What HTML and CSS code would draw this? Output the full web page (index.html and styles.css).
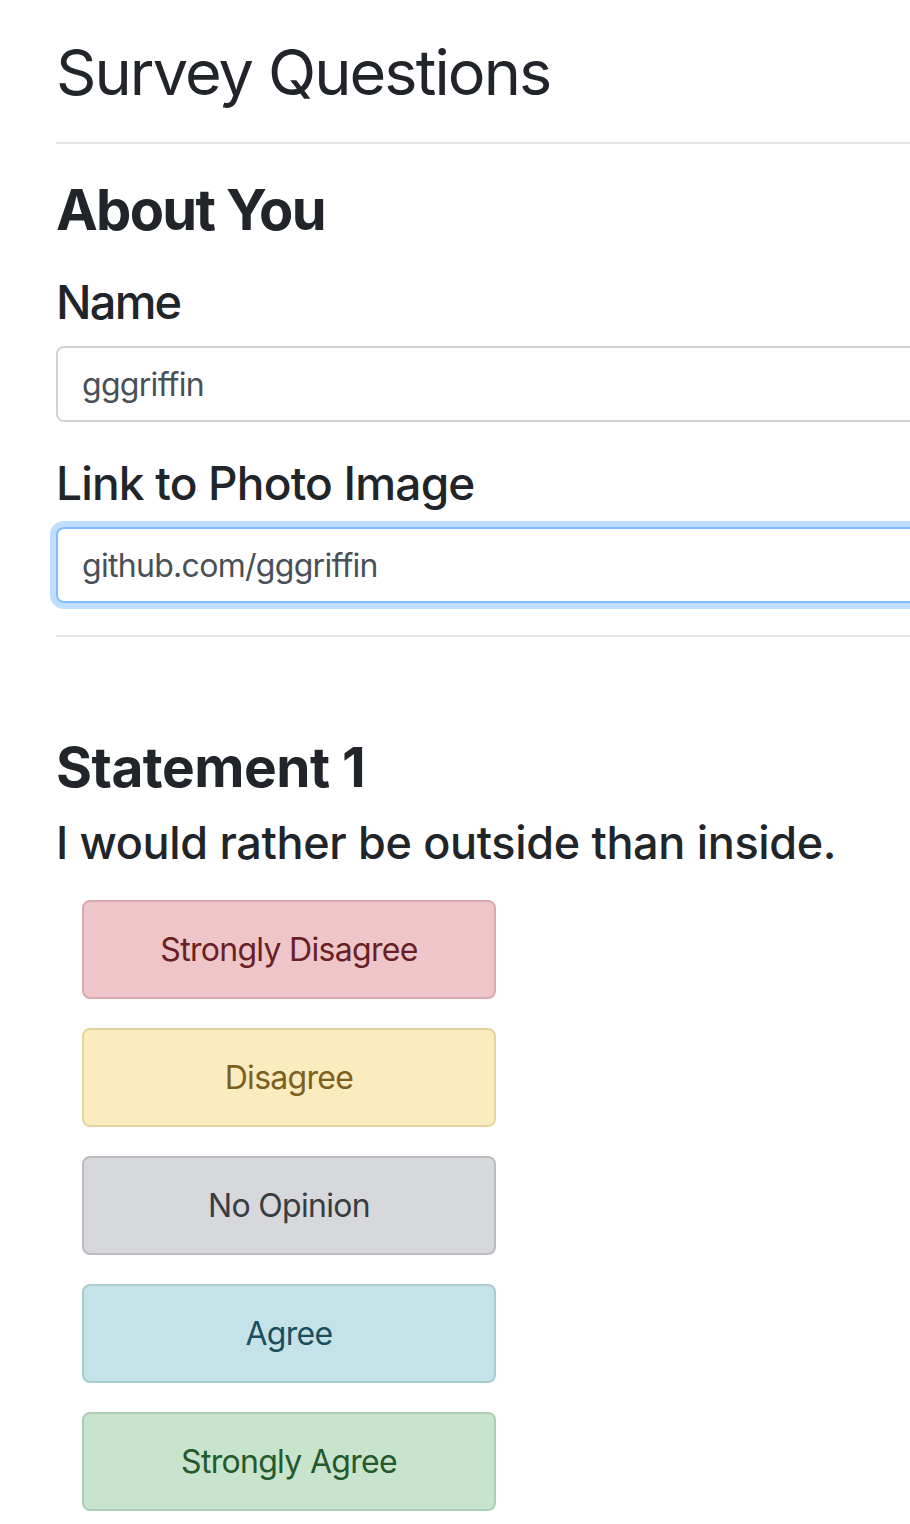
FILE: index.html
```html
<!DOCTYPE html>
<html lang="en">
<head>
<meta charset="utf-8">
<title>Survey Questions</title>
<link rel="stylesheet" href="styles.css">
</head>
<body>
<div class="container">
  <h1 class="title">Survey Questions</h1>
  <hr class="rule rule-top">
  <h3 class="section">About You</h3>
  <label class="label label-name" for="name">Name</label>
  <input class="field" id="name" type="text" value="gggriffin">
  <label class="label label-photo" for="photo">Link to Photo Image</label>
  <input class="field field-focus" id="photo" type="text" value="github.com/gggriffin">
  <hr class="rule rule-mid">
  <h3 class="statement">Statement 1</h3>
  <h4 class="question">I would rather be outside than inside.</h4>
  <div class="choices">
    <button class="choice choice-danger" type="button">Strongly Disagree</button>
    <button class="choice choice-warning" type="button">Disagree</button>
    <button class="choice choice-secondary" type="button">No Opinion</button>
    <button class="choice choice-info" type="button">Agree</button>
    <button class="choice choice-success" type="button">Strongly Agree</button>
  </div>
</div>
</body>
</html>
```

FILE: styles.css
```css
html, body {
  margin: 0;
  padding: 0;
  background: #ffffff;
  overflow: hidden;
}

body {
  font-family: Inter, "Noto Sans", "Liberation Sans", sans-serif;
  color: #212529;
}

.container {
  width: 1200px;
  padding-left: 56px;
  display: flex;
  flex-direction: column;
  align-items: stretch;
}

.title {
  font-size: 63px;
  font-weight: 400;
  line-height: 1.2;
  margin: 35px 0 0;
  letter-spacing: -1.9px;
}

.rule {
  border: 0;
  border-top: 2px solid #e5e5e5;
  margin: 0;
  height: 0;
}

.rule-top {
  margin-top: 31px;
}

.section {
  font-size: 56px;
  font-weight: 700;
  line-height: 1.2;
  margin: 33px 0 0;
  letter-spacing: -1.7px;
}

.label {
  display: block;
  font-size: 47px;
  font-weight: 500;
  line-height: 1.2;
  letter-spacing: -1.8px;
}

.label-name {
  margin-top: 30px;
}

.label-photo {
  margin-top: 34px;
  font-size: 46px;
  letter-spacing: -0.8px;
}

.field {
  box-sizing: border-box;
  height: 76px;
  margin-top: 16px;
  padding: 0 24px;
  border: 2px solid #ced4da;
  border-radius: 8px;
  font-family: inherit;
  font-size: 32px;
  letter-spacing: -0.7px;
  color: #495057;
  background: #fff;
  outline: none;
}

.field-focus {
  border-color: #80bdff;
  box-shadow: 0 0 0 6px rgba(0, 123, 255, 0.25);
}

.rule-mid {
  margin-top: 32px;
}

.statement {
  font-size: 55px;
  font-weight: 700;
  line-height: 1.2;
  margin: 97px 0 0;
  letter-spacing: -0.5px;
}

.question {
  font-size: 45px;
  font-weight: 500;
  line-height: 1.2;
  margin: 16px 0 0;
  letter-spacing: -0.35px;
}

.choices {
  display: flex;
  flex-direction: column;
  align-items: flex-start;
  gap: 29px;
  margin-top: 30px;
  padding-left: 26px;
}

.choice {
  box-sizing: border-box;
  width: 414px;
  height: 99px;
  border: 2px solid;
  border-radius: 8px;
  font-family: inherit;
  font-size: 32px;
  font-weight: 400;
  letter-spacing: -0.7px;
  text-align: center;
  padding: 0;
  cursor: pointer;
}

.choice-danger {
  background: #eec6ca;
  border-color: #d9aaaf;
  color: #6a1f25;
}

.choice-warning {
  background: #fbecc0;
  border-color: #e5d39e;
  color: #7d6020;
}

.choice-secondary {
  background: #d7d8dc;
  border-color: #babcc0;
  color: #383d41;
}

.choice-info {
  background: #c4e3e8;
  border-color: #a9cbd1;
  color: #1c4f5b;
}

.choice-success {
  background: #c8e4cc;
  border-color: #acceb3;
  color: #245a2d;
}
```
